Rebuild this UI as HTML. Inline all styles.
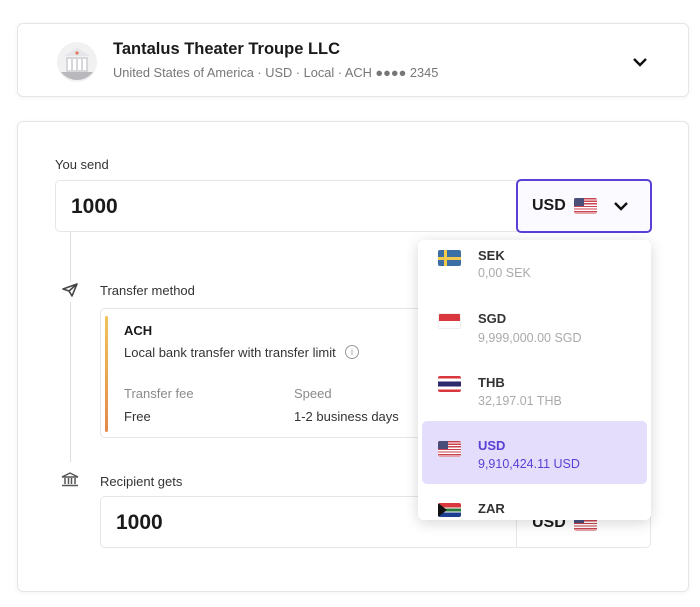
<!DOCTYPE html>
<html><head><style>
*{box-sizing:border-box;margin:0;padding:0}
body{width:700px;height:607px;background:#fff;font-family:"Liberation Sans",sans-serif;position:relative;overflow:hidden;color:#1a1a1a}
.a{position:absolute}
.card{position:absolute;border:1px solid #e6e6e6;border-radius:6px;background:#fff;box-shadow:0 1px 6px rgba(0,0,0,.05)}
.g{color:#8a8a8a}
.t{font-size:13px;color:#333}
.flag{position:absolute;width:23px;height:16px;border-radius:2px;overflow:hidden}
.us{background:repeating-linear-gradient(#c9434f 0 1.3px,#fff 1.3px 2.6px)}
.us:before{content:"";position:absolute;left:0;top:0;width:10px;height:8px;background:#4a4f7a}
.dd{font-size:13px}
.dd b{position:absolute;left:478px;font-size:13px;color:#333}
.dd span{position:absolute;left:478px;font-size:12.5px;color:#aaa}
</style></head><body>
<div class="card" style="left:17px;top:23px;width:672px;height:74px"></div>
<svg class="a" style="left:57px;top:42px" width="40" height="40" viewBox="0 0 40 40">
<circle cx="20" cy="20" r="20" fill="#f1f1f1"/>
<path d="M4 30 A20 20 0 0 0 36 30 Z" fill="#b8b8bd"/>
<path d="M7 14 L20 6 L33 14 Z" fill="#e6e6ea"/>
<rect x="9" y="15" width="22" height="15" fill="#d6d6db"/>
<rect x="11" y="17" width="3" height="11" fill="#fff"/><rect x="16" y="17" width="3" height="11" fill="#fff"/><rect x="21" y="17" width="3" height="11" fill="#fff"/><rect x="26" y="17" width="3" height="11" fill="#fff"/>
<circle cx="20" cy="11" r="1.6" fill="#e07a5f"/>
</svg>
<div class="a" style="left:113px;top:40px;font-size:16.5px;font-weight:bold">Tantalus Theater Troupe LLC</div>
<div class="a g" style="left:113px;top:65px;font-size:12.8px;color:#777">United States of America · USD · Local · ACH ●●●● 2345</div>
<svg class="a" style="left:632px;top:56px" width="16" height="12" viewBox="0 0 16 12"><path d="M2 3 L8 9 L14 3" stroke="#111" stroke-width="2.4" fill="none"/></svg>

<div class="card" style="left:17px;top:121px;width:672px;height:471px"></div>
<div class="a t" style="left:55px;top:157px">You send</div>
<div class="a" style="left:55px;top:180px;width:596px;height:52px;border:1px solid #e6e6e6;border-radius:5px"></div>
<div class="a" style="left:71px;top:195px;font-size:21px;font-weight:bold">1000</div>
<div class="a" style="left:516px;top:179px;width:136px;height:54px;border:2px solid #5b3fd6;border-radius:5px;background:#fbfaff"></div>
<div class="a" style="left:532px;top:197px;font-size:16px;font-weight:bold">USD</div>
<div class="flag us" style="left:574px;top:198px"></div>
<svg class="a" style="left:613px;top:200px" width="16" height="12" viewBox="0 0 16 12"><path d="M2 3 L8 9 L14 3" stroke="#111" stroke-width="2.4" fill="none"/></svg>

<div class="a" style="left:70px;top:232px;width:1px;height:50px;background:#ddd"></div>
<div class="a" style="left:70px;top:302px;width:1px;height:160px;background:#ddd"></div>
<svg class="a" style="left:61px;top:282px" width="18" height="16" viewBox="0 0 18 16"><path d="M2 7 L16 2 L11 14 L8 9 Z M8 9 L16 2" stroke="#444" stroke-width="1.6" fill="none" stroke-linejoin="round"/></svg>
<div class="a t" style="left:100px;top:283px">Transfer method</div>
<div class="a" style="left:100px;top:308px;width:420px;height:130px;border:1px solid #e6e6e6;border-radius:5px"></div>
<div class="a" style="left:105px;top:316px;width:3px;height:116px;background:linear-gradient(#f0c45a,#e28a4a);border-radius:2px"></div>
<div class="a" style="left:124px;top:323px;font-size:13px;font-weight:bold">ACH</div>
<div class="a t" style="left:124px;top:345px">Local bank transfer with transfer limit</div>
<div class="a" style="left:345px;top:345px;width:14px;height:14px;border:1.3px solid #999;border-radius:50%;font-size:9px;color:#999;text-align:center;line-height:12px">i</div>
<div class="a g" style="left:124px;top:386px;font-size:13px">Transfer fee</div>
<div class="a g" style="left:294px;top:386px;font-size:13px">Speed</div>
<div class="a t" style="left:124px;top:409px">Free</div>
<div class="a t" style="left:294px;top:409px">1-2 business days</div>

<svg class="a" style="left:61px;top:472px" width="18" height="15" viewBox="0 0 18 15"><path d="M1 5 L9 1 L17 5 Z" fill="none" stroke="#555" stroke-width="1.4"/><path d="M4 6v6M7.5 6v6M10.5 6v6M14 6v6M1 13.5h16" stroke="#555" stroke-width="1.5"/></svg>
<div class="a t" style="left:100px;top:474px">Recipient gets</div>
<div class="a" style="left:100px;top:496px;width:551px;height:52px;border:1px solid #e6e6e6;border-radius:5px"></div>
<div class="a" style="left:516px;top:496px;width:1px;height:52px;background:#e6e6e6"></div>
<div class="a" style="left:116px;top:511px;font-size:21px;font-weight:bold">1000</div>
<div class="a" style="left:532px;top:514px;font-size:16px;font-weight:bold">USD</div>
<div class="flag us" style="left:574px;top:515px"></div>

<div class="a" style="left:418px;top:240px;width:233px;height:280px;background:#fff;border-radius:6px;box-shadow:0 3px 14px rgba(0,0,0,.16);overflow:hidden">
<div class="a" style="left:4px;top:181px;width:225px;height:63px;background:#e4ddfb;border-radius:5px"></div>
</div>
<div class="dd">
<div class="flag" style="left:438px;top:250px;background:#3a6ea5"><div class="a" style="left:6px;top:0;width:3px;height:16px;background:#f2c94c"></div><div class="a" style="left:0;top:6.5px;width:23px;height:3px;background:#f2c94c"></div></div>
<b style="top:248px">SEK</b><span style="top:266px">0,00 SEK</span>
<div class="flag" style="left:438px;top:313px;background:linear-gradient(#d9363e 50%,#fff 50%);border:1px solid #eee"></div>
<b style="top:311px">SGD</b><span style="top:331px">9,999,000.00 SGD</span>
<div class="flag" style="left:438px;top:376px;background:linear-gradient(#d9363e 0 17%,#fff 17% 33%,#2d2a6e 33% 67%,#fff 67% 83%,#d9363e 83%)"></div>
<b style="top:375px">THB</b><span style="top:394px">32,197.01 THB</span>
<div class="flag us" style="left:438px;top:441px"></div>
<b style="top:438px;color:#5b3fd6">USD</b><span style="top:457px;color:#5b3fd6">9,910,424.11 USD</span>
<div class="flag" style="left:438px;top:503px;height:14px;background:linear-gradient(#d9363e 0 33%,#fff 33% 40%,#2b7a3b 40% 60%,#fff 60% 67%,#1d3f8f 67%)"><div class="a" style="left:0;top:0;border-left:9px solid #111;border-top:7px solid transparent;border-bottom:7px solid transparent"></div></div>
<b style="top:501px">ZAR</b>
</div>
</body></html>
